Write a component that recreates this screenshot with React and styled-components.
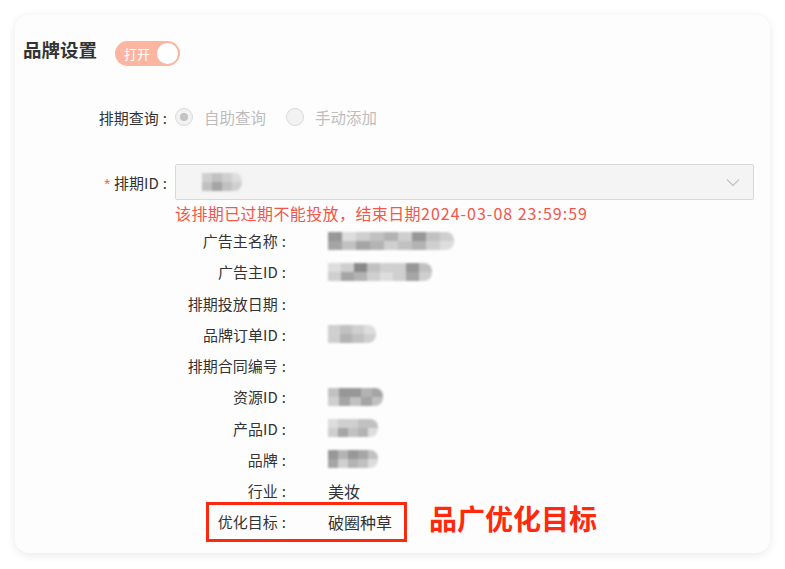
import React from 'react';
import styled, { createGlobalStyle } from 'styled-components';

const GlobalStyle = createGlobalStyle`
  html, body {
    margin: 0;
    padding: 0;
    background: #fff;
  }
  body {
    font-family: "Noto Sans CJK SC", "Noto Sans", "Liberation Sans", sans-serif;
    color: #333;
  }
`;

const details = [
  { label: '广告主名称', w: 14, cells: [[6, 1, 2, 3, 4, 2, 6, 3, 2], [5, 3, 5, 4, 2, 3, 4, 2, 1]] },
  { label: '广告主ID', w: 13, cells: [[1, 2, 7, 3, 2, 2, 6, 3], [2, 5, 4, 2, 1, 2, 5, 2]] },
  { label: '排期投放日期' },
  { label: '品牌订单ID', w: 12, cells: [[2, 3, 2, 1], [2, 4, 3, 2]] },
  { label: '排期合同编号' },
  { label: '资源ID', w: 11, cells: [[3, 6, 6, 4, 5], [2, 5, 3, 5, 3]] },
  { label: '产品ID', w: 10, cells: [[1, 2, 2, 3, 3], [2, 5, 3, 4, 1]] },
  { label: '品牌', w: 10, cells: [[6, 4, 6, 5, 3], [5, 2, 4, 3, 1]] },
  { label: '行业', value: '美妆' },
];

const shade = (n) => `rgb(${235 - n * 14}, ${235 - n * 14}, ${235 - n * 14})`;

function Mosaic({ cells, w = 10 }) {
  return (
    <MosaicBox>
      {cells.map((row, i) => (
        <MosaicRow key={i}>
          {row.map((c, j) => (
            <MosaicCell key={j} style={{ background: shade(c), width: w }} />
          ))}
        </MosaicRow>
      ))}
    </MosaicBox>
  );
}

const App = () => {
  return (
    <Page>
      <GlobalStyle />
      <Card>
        <Header>
          <Title>品牌设置</Title>
          <Switch>
            <SwitchText>打开</SwitchText>
            <Knob />
          </Switch>
        </Header>

        <FormRow $top={35}>
          <FormLabel>排期查询<Colon>:</Colon></FormLabel>
          <RadioGroup>
            <RadioItem>
              <Radio $checked />
              <RadioText>自助查询</RadioText>
            </RadioItem>
            <RadioItem>
              <Radio />
              <RadioText>手动添加</RadioText>
            </RadioItem>
          </RadioGroup>
        </FormRow>

        <FormRow $top={31}>
          <FormLabel><Star>*</Star>排期ID<Colon>:</Colon></FormLabel>
          <Select>
            <SelectValue>
              <Mosaic cells={[[2, 3, 2, 1], [3, 5, 3, 2]]} />
            </SelectValue>
            <svg width="14" height="9" viewBox="0 0 14 9">
              <path d="M1 1.5 L7 7.5 L13 1.5" fill="none" stroke="#c4c4c4" strokeWidth="1.3" />
            </svg>
          </Select>
        </FormRow>
        <ErrorText>
          该排期已过期不能投放，结束日期<DateText>2024-03-08 23:59:59</DateText>
        </ErrorText>

        <DetailList>
          {details.map((d) => (
            <DetailRow key={d.label}>
              <DetailLabel><span>{d.label}<Colon>:</Colon></span></DetailLabel>
              <DetailValue>
                {d.value ? d.value : d.cells ? <Mosaic cells={d.cells} w={d.w} /> : null}
              </DetailValue>
            </DetailRow>
          ))}
          <Annotated>
            <DetailRow $highlight>
              <DetailLabel><span>优化目标<Colon>:</Colon></span></DetailLabel>
              <DetailValue>破圈种草</DetailValue>
            </DetailRow>
            <Note>品广优化目标</Note>
          </Annotated>
        </DetailList>
      </Card>
    </Page>
  );
};

export default App;

const Page = styled.div`
  width: 785px;
  height: 569px;
  padding: 15px;
  box-sizing: border-box;
`;

const Card = styled.div`
  width: 755px;
  height: 538px;
  box-sizing: border-box;
  padding: 24px 0 0 8px;
  background: #fdfdfd;
  border-radius: 14px;
  box-shadow: 0 2px 10px rgba(0, 0, 0, 0.09);
  overflow: hidden;
`;

const Header = styled.div`
  display: flex;
  align-items: flex-start;
  gap: 18px;
`;

const Title = styled.div`
  font-size: 18.5px;
  line-height: 20px;
  font-weight: 600;
  color: #333;
`;

const Switch = styled.div`
  margin-top: 2px;
  width: 65px;
  height: 25px;
  border-radius: 13px;
  background: #fcb5a0;
  display: flex;
  align-items: center;
  justify-content: space-between;
  padding: 0 2px 0 9px;
  box-sizing: border-box;
`;

const SwitchText = styled.span`
  color: #fff;
  font-size: 13px;
`;

const Knob = styled.span`
  width: 21px;
  height: 21px;
  border-radius: 50%;
  background: #fff;
`;

const FormRow = styled.div`
  display: flex;
  align-items: center;
  margin-top: ${(p) => p.$top}px;
  min-height: 32px;
`;

const FormLabel = styled.div`
  width: 144px;
  margin-right: 8px;
  text-align: right;
  font-size: 15px;
  color: #333;
  flex-shrink: 0;
`;

const Colon = styled.span`
  margin-left: 4px;
`;

const Star = styled.span`
  color: #f5554a;
  margin-right: 4px;
  font-family: "Liberation Sans", sans-serif;
`;

const RadioGroup = styled.div`
  display: flex;
  align-items: center;
  gap: 20px;
`;

const RadioItem = styled.label`
  display: flex;
  align-items: center;
  gap: 11px;
`;

const Radio = styled.span`
  width: 18px;
  height: 18px;
  border-radius: 50%;
  border: 1px solid #d9d9d9;
  background: #f2f2f2;
  box-sizing: border-box;
  display: flex;
  align-items: center;
  justify-content: center;
  &::after {
    content: '';
    display: ${(p) => (p.$checked ? 'block' : 'none')};
    width: 8px;
    height: 8px;
    border-radius: 50%;
    background: #c4c4c4;
  }
`;

const RadioText = styled.span`
  font-size: 15.5px;
  color: #bdbdbd;
`;

const Select = styled.div`
  width: 579px;
  height: 36px;
  box-sizing: border-box;
  border: 1px solid #d9d9d9;
  border-radius: 2px;
  background: #f4f4f4;
  display: flex;
  align-items: center;
  justify-content: space-between;
  padding: 0 13px 0 26px;
`;

const SelectValue = styled.div`
  display: flex;
  align-items: center;
`;

const ErrorText = styled.div`
  margin: 3px 0 0 152px;
  font-size: 16px;
  line-height: 20px;
  letter-spacing: 0.4px;
  color: #f5554a;
  white-space: nowrap;
`;

const DateText = styled.span`
  letter-spacing: 1px;
`;

const DetailList = styled.div`
  margin: 2px 0 0 183px;
  display: flex;
  flex-direction: column;
`;

const DetailRow = styled.div`
  display: flex;
  align-items: center;
  height: ${(p) => (p.$highlight ? '40px' : '31.25px')};
  box-sizing: border-box;
  padding-left: ${(p) => (p.$highlight ? 0 : '3px')};
  border: ${(p) => (p.$highlight ? '3px solid #fb2a0e' : 'none')};
  width: ${(p) => (p.$highlight ? '201px' : 'auto')};
`;

const DetailLabel = styled.div`
  width: 77px;
  margin-right: 2px;
  display: flex;
  justify-content: flex-end;
  font-size: 15px;
  color: #333;
  flex-shrink: 0;
  white-space: nowrap;
`;

const DetailValue = styled.div`
  margin-left: 40px;
  font-size: 16px;
  color: #333;
  display: flex;
  align-items: center;
`;

const Annotated = styled.div`
  display: flex;
  align-items: center;
  gap: 22px;
  margin-top: -4.6px;
`;

const Note = styled.div`
  font-size: 28px;
  font-weight: 700;
  color: #ff2a0d;
  margin-top: -7px;
`;

const MosaicBox = styled.div`
  display: flex;
  flex-direction: column;
  filter: blur(1.2px);
  border-radius: 0 8px 8px 0;
  overflow: hidden;
`;

const MosaicRow = styled.div`
  display: flex;
`;

const MosaicCell = styled.span`
  height: 9px;
`;
